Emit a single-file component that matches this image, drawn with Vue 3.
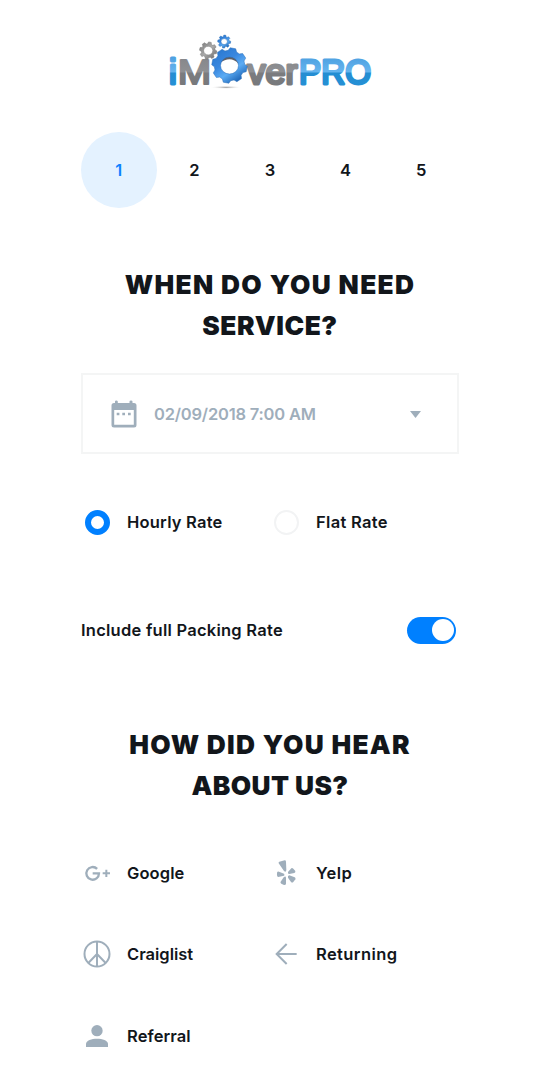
<script setup>
import { ref } from 'vue'

const steps = [1, 2, 3, 4, 5]
const activeStep = ref(1)
const rate = ref('hourly')
const packing = ref(true)

const rates = [
  { id: 'hourly', label: 'Hourly Rate' },
  { id: 'flat', label: 'Flat Rate' },
]

const sources = [
  { icon: 'google', label: 'Google' },
  { icon: 'yelp', label: 'Yelp' },
  { icon: 'peace', label: 'Craiglist' },
  { icon: 'arrow', label: 'Returning' },
  { icon: 'person', label: 'Referral' },
]

// Cog outline with an elliptical hole, for an evenodd fill
function gear(cx, cy, outer, inner, hx, hy, teeth, phase) {
  const pts = []
  const step = (Math.PI * 2) / teeth
  for (let i = 0; i < teeth; i++) {
    const a = phase + i * step
    for (const [r, o] of [[inner, -0.36], [outer, -0.2], [outer, 0.2], [inner, 0.36]]) {
      pts.push(`${(cx + r * Math.cos(a + o * step)).toFixed(2)} ${(cy + r * Math.sin(a + o * step)).toFixed(2)}`)
    }
  }
  return `M${pts.join('L')}ZM${cx - hx} ${cy}a${hx} ${hy} 0 1 0 ${hx * 2} 0a${hx} ${hy} 0 1 0 ${-hx * 2} 0Z`
}

const bigGear = gear(69.5, 40.5, 17.8, 15.2, 9, 8.5, 8, 0.2)
const greyGear = gear(48.2, 25.6, 8.7, 6.9, 4.6, 4.3, 8, 0.2)
const blueGear = gear(64.2, 16.6, 6.5, 5, 3.2, 3, 8, 0.1)
</script>

<template>
  <main class="page">
    <header class="brand">
      <svg class="logo" viewBox="0 0 220 75" role="img" aria-label="iMoverPRO">
        <defs>
          <linearGradient id="blueText" gradientUnits="userSpaceOnUse" x1="0" y1="31" x2="0" y2="61">
            <stop offset="0" stop-color="#4b9fe0" /><stop offset=".52" stop-color="#65b4ee" />
            <stop offset=".58" stop-color="#248dd2" /><stop offset="1" stop-color="#2590d5" />
          </linearGradient>
          <linearGradient id="greyText" gradientUnits="userSpaceOnUse" x1="0" y1="31" x2="0" y2="61">
            <stop offset="0" stop-color="#85868a" /><stop offset=".52" stop-color="#8f9093" />
            <stop offset=".58" stop-color="#7b7c7f" /><stop offset="1" stop-color="#77797c" />
          </linearGradient>
          <linearGradient id="gearBlue" x1="0" y1="0" x2=".7" y2="1">
            <stop offset="0" stop-color="#2674cb" /><stop offset=".45" stop-color="#3987df" />
            <stop offset=".7" stop-color="#5cacf4" /><stop offset="1" stop-color="#1b62b4" />
          </linearGradient>
          <linearGradient id="gearGrey" x1="0" y1="0" x2="1" y2="1">
            <stop offset="0" stop-color="#777" /><stop offset=".5" stop-color="#aaa" /><stop offset="1" stop-color="#666" />
          </linearGradient>
          <radialGradient id="shade">
            <stop offset="0" stop-color="#999" /><stop offset="1" stop-color="#fff" stop-opacity="0" />
          </radialGradient>
        </defs>
        <ellipse cx="66" cy="62.3" rx="16" ry="1.7" fill="url(#shade)" />
        <g class="wordmark">
          <text class="blue" x="8.9" y="58.8">i</text>
          <text class="grey big-m" x="17.7" y="58.8" textLength="33.4" lengthAdjust="spacingAndGlyphs">M</text>
          <text class="grey" x="87.5" y="58.8" textLength="50" lengthAdjust="spacingAndGlyphs">ver</text>
          <text class="blue" x="139" y="58.8" textLength="72" lengthAdjust="spacingAndGlyphs">PRO</text>
        </g>
        <path :d="greyGear" class="cog-grey" />
        <path :d="blueGear" class="cog-blue" />
        <circle cx="69.5" cy="40.5" r="11" fill="#fff" />
        <path d="M60.5 38C63 28 77 30 78.5 39C74 33 66 33 60.5 38Z" fill="#606168" />
        <path :d="bigGear" class="cog-blue" />
      </svg>
    </header>

    <nav class="steps">
      <button v-for="n in steps" :key="n" class="step" :class="{ active: n === activeStep }" @click="activeStep = n">{{ n }}</button>
    </nav>

    <h1 class="title service"><span class="l1">WHEN DO YOU NEED</span><span class="l2">SERVICE?</span></h1>

    <div class="date">
      <svg class="calendar" viewBox="0 0 26 28">
        <path fill-rule="evenodd" d="M4 1.5Q4 .5 5.3 .5T6.8 1.5V3H18.5V1.5Q18.5 .5 20 .5T21.5 1.5V3H23Q25.5 3 25.5 5.5V25Q25.5 27.5 23 27.5H3Q.5 27.5 .5 25V5.5Q.5 3 3 3H4ZM3.2 10V24.8H22.8V10Z" />
        <path d="M5.7 12.8h2.7v2.5H5.7zM11.3 12.8H14v2.5h-2.7zM17 12.8h2.7v2.5H17z" />
      </svg>
      <span class="date-text">02/09/2018 7:00 AM</span>
      <svg class="caret" viewBox="0 0 11 7"><path d="M0 0H11L5.5 7Z" /></svg>
    </div>

    <div class="rates">
      <label v-for="r in rates" :key="r.id" class="item" @click="rate = r.id">
        <span class="slot"><span class="radio" :class="{ checked: rate === r.id }"></span></span>
        <span :class="r.id">{{ r.label }}</span>
      </label>
    </div>

    <div class="packing">
      <span class="packing-label">Include full Packing Rate</span>
      <button class="switch" :class="{ on: packing }" aria-label="Toggle packing" @click="packing = !packing"></button>
    </div>

    <h2 class="title hear"><span class="l3">HOW DID YOU HEAR</span><span class="l4">ABOUT US?</span></h2>

    <div class="sources">
      <div v-for="s in sources" :key="s.label" class="item">
        <svg class="slot" viewBox="0 0 84 84">
          <g v-if="s.icon === 'google'">
            <path class="line google-g" d="M42.4 29.6A19 19 0 1 0 48 43H29" />
            <path class="line google-plus" d="M70 32V54M59 43H81" />
          </g>
          <g v-else-if="s.icon === 'yelp'" class="petals">
            <path d="M22 8L38 4Q42 4 42 8L43 33Q42 41 36 36L20 13Q19 9 22 8Z" />
            <path d="M15 41Q16 37 21 38L36 44Q39 48 36 50L19 54Q14 54 15 41Z" />
            <path d="M48 39L58 28Q60 25 64 29L70 36Q71 41 67 42L52 45Q46 45 48 39Z" />
            <path d="M52 49L68 55Q72 57 70 61L64 69Q61 72 57 69L48 56Q46 50 52 49Z" />
            <path d="M42 56V74Q41 79 36 78L28 74Q24 71 26 68L35 55Q41 49 42 56Z" />
          </g>
          <g v-else-if="s.icon === 'peace'" class="line peace">
            <circle cx="42" cy="42" r="37.5" /><path d="M42 4V80M42 42L16 69M42 42L68 69" />
          </g>
          <path v-else-if="s.icon === 'arrow'" class="line arrow" d="M74 42H14M44 12L14 42L44 72" />
          <g v-else>
            <circle cx="42" cy="26" r="17" /><path d="M9 75V66C9 55 26 50 42 50S75 55 75 66V75Z" />
          </g>
        </svg>
        <span :class="s.icon">{{ s.label }}</span>
      </div>
    </div>
  </main>
</template>

<style>
body { background: #fff; }
</style>

<style scoped>
.page {
  box-sizing: border-box;
  width: 540px;
  height: 1080px;
  overflow: hidden;
  padding: 25px 81px 0;
  background: #fff;
  color: #12161b;
  font: 600 16.5px/24px Inter, "Liberation Sans", sans-serif;
}
button { font: inherit; color: inherit; border: 0; padding: 0; background: none; }
.brand { display: flex; justify-content: center; height: 75px; }
.logo { width: 220px; height: 75px; }
.wordmark { font: 400 35px "Liberation Sans", sans-serif; stroke-width: 3; stroke-linejoin: round; }
.blue { fill: url(#blueText); stroke: url(#blueText); }
.grey { fill: url(#greyText); stroke: url(#greyText); }
.big-m { stroke-width: 2.2; }
.cog-blue { fill: url(#gearBlue); fill-rule: evenodd; stroke: #286cb7; stroke-width: .5; stroke-linejoin: round; }
.cog-grey { fill: url(#gearGrey); fill-rule: evenodd; stroke: #777; stroke-width: .5; }
.steps { display: flex; justify-content: space-between; margin-top: 32px; }
.step { width: 75.6px; height: 76px; border-radius: 50%; }
.step.active { background: #e4f2ff; color: #0d83ff; }
.title { margin: 0; font-size: 26.3px; font-weight: 900; line-height: 41px; text-align: center; white-space: nowrap; }
.title span { display: block; }
.l1 { letter-spacing: 1.32px; }
.l3 { letter-spacing: 1.25px; }
.l2 { letter-spacing: .6px; }
.l4 { letter-spacing: .4px; }
.service { margin-top: 56px; }
.date {
  box-sizing: border-box;
  display: flex;
  align-items: center;
  height: 81px;
  margin-top: 27px;
  padding: 0 36px 0 28px;
  border: 2px solid #f4f5f5;
  color: #9faebb;
}
svg { display: block; fill: #9faebb; flex: none; }
.calendar { width: 26px; height: 28px; }
.date-text { margin-left: 17px; white-space: nowrap; letter-spacing: -.2px; }
.caret { width: 11px; height: 7px; margin: 1px 0 0 auto; }
.rates, .sources { display: grid; grid-template-columns: 189px 189px; }
.rates { margin-top: 54px; }
.item { display: flex; align-items: center; height: 28px; padding-left: 2px; white-space: nowrap; }
.slot { display: grid; place-items: center; width: 28px; height: 28px; margin-right: 16px; }
.radio { box-sizing: border-box; width: 25px; height: 25px; border: 2px solid #f2f3f4; border-radius: 50%; }
.radio.checked { border: 6px solid #0080ff; }
.hourly { letter-spacing: .22px; }
.flat { letter-spacing: .32px; }
.packing { display: flex; justify-content: space-between; align-items: center; height: 28px; margin-top: 80px; padding-right: 3px; }
.packing-label { letter-spacing: .25px; }
.switch { box-sizing: border-box; display: flex; width: 49px; height: 27px; padding: 2.5px; border-radius: 14px; background: #d5dbe0; }
.switch.on { justify-content: flex-end; background: #0080ff; }
.switch::after { content: ""; width: 22px; height: 22px; border-radius: 50%; background: #fff; }
.hear { margin-top: 80px; }
.sources { row-gap: 53.3px; margin-top: 53px; }
.google, .person { letter-spacing: .1px; }
.yelp, .arrow { letter-spacing: .4px; }
.line { fill: none; stroke: #9faebb; }
.google-g { stroke-width: 7; }
.google-plus { stroke-width: 6; }
.line.peace { stroke-width: 6; }
.line.arrow { stroke-width: 6; }
</style>
